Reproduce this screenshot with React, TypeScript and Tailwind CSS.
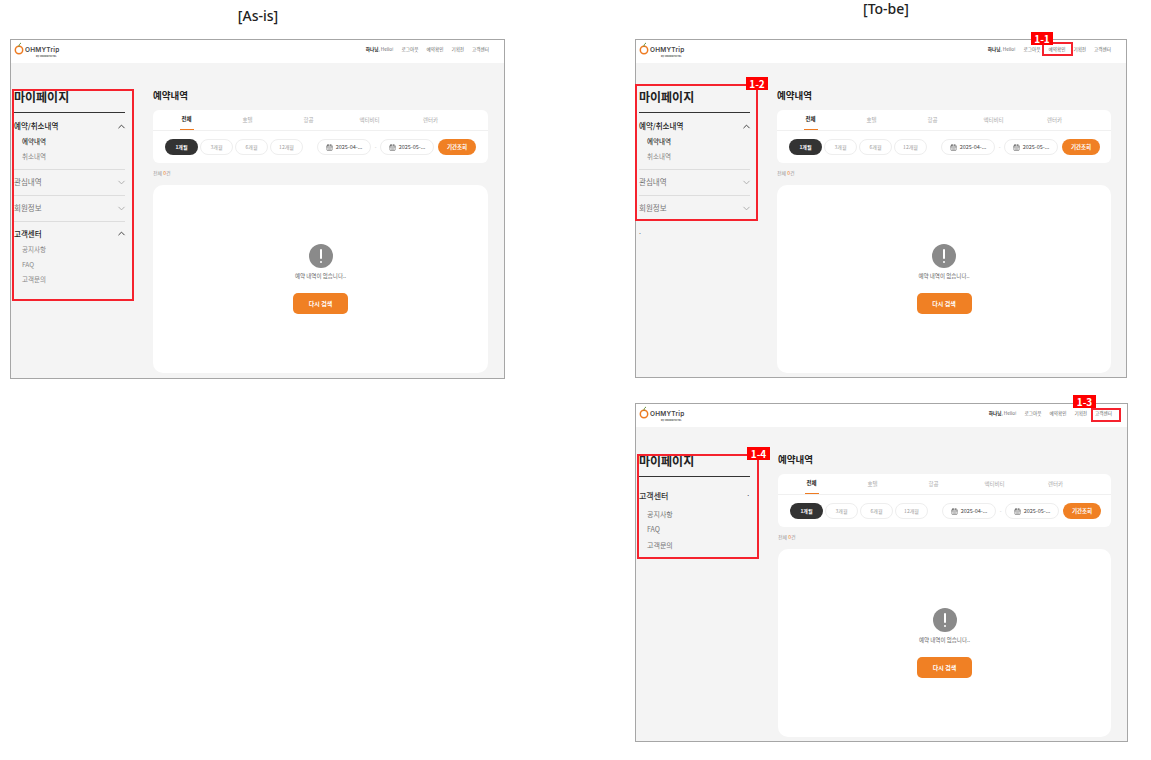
import { CalendarDays, ChevronDown, ChevronUp } from 'lucide-react'

const FONT = { kr: "font-['Noto_Sans_CJK_KR','Noto_Sans',sans-serif]" }

const NAV = ['로그아웃', '예약확인', '기획전', '고객센터']
const TABS = ['전체', '호텔', '항공', '액티비티', '렌터카']
const PERIODS = ['1개월', '3개월', '6개월', '12개월']

type MenuItem = { label: string; open?: boolean; active?: string; subs?: string[] }

const BOOKING: MenuItem = { label: '예약/취소내역', open: true, active: '예약내역', subs: ['예약내역', '취소내역'] }
const SUPPORT: MenuItem = { label: '고객센터', open: true, subs: ['공지사항', 'FAQ', '고객문의'] }

function Logo() {
  return (
    <div className="flex flex-col pt-[1px]">
      <div className="flex items-center gap-[1px]">
        <svg width="10" height="13" viewBox="0 0 10 13" className="-mt-[3px]">
          <circle cx="5" cy="8" r="3.7" fill="none" stroke="#ee7b22" strokeWidth="1.5" />
          <path d="M5 4.5C5 3 5.6 1.8 7 1" fill="none" stroke="#5c8a2e" strokeWidth="1" />
        </svg>
        <span className="font-['Inter',sans-serif] text-[6.5px] leading-none font-semibold tracking-[0.2px] text-[#444]">OHMYTrip</span>
      </div>
      <span className="ml-[22px] font-['Inter',sans-serif] text-[2.5px] leading-[4px] font-bold text-[#555]">by ONDERHOTEL</span>
    </div>
  )
}

function Header() {
  return (
    <div className="flex h-[23px] shrink-0 items-center justify-between bg-white pr-[15px] pl-[3px]">
      <Logo />
      <div className="flex items-center gap-2 pb-[5px] text-[4.6px] text-[#666]">
        <span><b className="text-[#222]">하나님</b>, Hello!</span>
        {NAV.map((n) => <span key={n}>{n}</span>)}
      </div>
    </div>
  )
}

function Section({ item }: { item: MenuItem }) {
  return (
    <div>
      <div className="flex h-5 items-center justify-between">
        <span className={item.open ? 'text-[7.5px] font-medium text-[#222]' : 'text-[7.5px] text-[#777]'}>{item.label}</span>
        {item.open ? (
          <ChevronUp className="-mr-[2px] h-[11px] w-[11px] text-[#333]" strokeWidth={2} />
        ) : (
          <ChevronDown className="-mr-[2px] h-[11px] w-[11px] text-[#aaa]" strokeWidth={2} />
        )}
      </div>
      {item.subs && (
        <div className="-mt-[1.5px] pb-[4px] pl-2">
          {item.subs.map((s) => (
            <div key={s} className={s === item.active ? 'flex h-[15px] items-center text-[6.5px] font-medium text-[#333]' : 'flex h-[15px] items-center text-[6.5px] text-[#888]'}>
              {s}
            </div>
          ))}
        </div>
      )}
    </div>
  )
}

function Sidebar({ variant }: { variant: 'full' | 'mine' | 'support' }) {
  return (
    <div className="ml-[3px] w-[111px] shrink-0 pt-[25px]">
      <div className="flex h-[18px] items-center text-[12px] font-bold text-[#222]">마이페이지</div>
      <div className="mt-[6px] h-px bg-[#333]" />
      {variant === 'support' ? (
        <div className="pt-[8px]">
          <div className="flex h-[22px] items-center justify-between text-[8px] font-medium text-[#333]">
            고객센터
            <span className="text-[6px] leading-none">·</span>
          </div>
          <div className="-mt-[1px] pl-2 text-[7px] text-[#777]">
            {SUPPORT.subs!.map((s) => <div key={s} className="flex h-[15.5px] items-center">{s}</div>)}
          </div>
        </div>
      ) : (
        <div className="divide-y divide-[#ddd] pt-[3px]">
          <Section item={BOOKING} />
          <div className="py-[2.5px]"><Section item={{ label: '관심내역' }} /></div>
          <div className="py-[2.5px]"><Section item={{ label: '회원정보' }} /></div>
          {variant === 'full' && <div className="pt-[2px]"><Section item={SUPPORT} /></div>}
        </div>
      )}
      {variant === 'mine' && <div className="mt-[7px] text-[7px] leading-none text-[#666]">.</div>}
    </div>
  )
}

function DateBox({ value }: { value: string }) {
  return (
    <div className="flex h-4 w-[54px] items-center justify-center gap-[3px] rounded-full border border-[#eee] bg-white text-[5.5px] text-[#444]">
      <CalendarDays className="h-[7px] w-[7px]" strokeWidth={1.8} />
      {value}
    </div>
  )
}

function Main({ tight }: { tight?: boolean }) {
  return (
    <div className={tight ? 'ml-[27px] flex flex-1 flex-col pt-[24px] pr-[15px]' : 'ml-[28px] flex flex-1 flex-col pt-[24px] pr-4'}>
      <div className="flex h-4 items-center text-[9.5px] font-bold text-[#222]">예약내역</div>
      <div className="mt-[7px] h-[53px] rounded-[6px] bg-white">
        <div className="flex h-[21px] border-b border-[#f0f0f0] px-[3px]">
          {TABS.map((t, i) => (
            <div key={t} className="flex w-[61px] justify-center">
              <span className={i === 0 ? 'flex h-[20px] w-[14px] items-center justify-center border-b border-[#ee7b22] text-[5.5px] font-bold text-[#222]' : 'flex h-[20px] items-center text-[5.5px] text-[#aaa]'}>
                {t}
              </span>
            </div>
          ))}
        </div>
        <div className="flex items-center pt-2 pl-3">
          <div className="flex gap-[2px]">
            {PERIODS.map((p, i) => (
              <div key={p} className={i === 0 ? 'flex h-4 w-[33px] items-center justify-center rounded-full bg-[#333] text-[5px] font-bold text-white' : 'flex h-4 w-[33px] items-center justify-center rounded-full border border-[#eee] text-[5px] text-[#999]'}>
                {p}
              </div>
            ))}
          </div>
          <div className="ml-[14px]"><DateBox value="2025-04-..." /></div>
          <span className="w-[9px] text-center text-[5px] text-[#bbb]">-</span>
          <DateBox value="2025-05-..." />
          <div className="ml-[4px] flex h-4 w-[38px] items-center justify-center rounded-full bg-[#f08024] text-[5.5px] font-bold text-white">기간조회</div>
        </div>
      </div>
      <div className="mt-[6px] flex h-2 items-center text-[5px] text-[#999]">
        전체&nbsp;<span className="text-[#ee7b22]">0</span>건
      </div>
      <div className="mt-2 flex h-[188px] flex-col items-center rounded-[10px] bg-white pt-[59px]">
        <div className="flex h-6 w-6 flex-col items-center justify-center gap-[1.5px] rounded-full bg-[#8a8a8a]">
          <span className="h-[10px] w-[2px] rounded-full bg-white" />
          <span className="h-[2px] w-[2px] rounded-full bg-white" />
        </div>
        <div className="mt-[4px] flex h-[9px] items-center text-[5.5px] text-[#666]">예약 내역이 없습니다..</div>
        <div className="mt-[12px] flex h-[21px] w-[55px] items-center justify-center rounded-[5px] bg-[#f08024] text-[6px] font-bold text-white">다시 검색</div>
      </div>
    </div>
  )
}

function Frame({ className, variant }: { className: string; variant: 'full' | 'mine' | 'support' }) {
  return (
    <div className={`absolute flex flex-col border border-[#a6a6a6] bg-[#f4f4f4] ${className}`}>
      <Header />
      <div className="flex flex-1">
        <Sidebar variant={variant} />
        <Main tight={variant === 'mine'} />
      </div>
    </div>
  )
}

function Callout({ box, tag, label }: { box: string; tag: string; label?: string }) {
  return (
    <>
      <div className={`absolute border-2 border-[#f5222d] ${box}`} />
      {label && (
        <div className={`absolute flex items-center justify-center bg-[#ff0000] text-[10px] font-bold text-white ${tag}`}>{label}</div>
      )}
    </>
  )
}

export default function App() {
  return (
    <div className={`relative h-[760px] w-[1151px] overflow-hidden bg-white ${FONT.kr}`}>
      <div className="absolute top-[7px] left-[228px] w-[60px] text-center font-['Noto_Sans',sans-serif] text-[14px] leading-[18px] font-medium text-[#222]">[As-is]</div>
      <div className="absolute top-0 left-[856px] w-[60px] text-center font-['Noto_Sans',sans-serif] text-[14px] leading-[18px] font-medium text-[#222]">[To-be]</div>

      <Frame className="top-[39px] left-[10px] h-[340px] w-[495px]" variant="full" />
      <Frame className="top-[39px] left-[635px] h-[339px] w-[492px]" variant="mine" />
      <Frame className="top-[403px] left-[635px] h-[339px] w-[493px]" variant="support" />

      <Callout box="top-[89px] left-[12px] h-[212px] w-[122px]" tag="" />
      <Callout box="top-[84px] left-[635px] h-[137px] w-[123px]" tag="top-[77px] left-[746px] h-[13px] w-[22px]" label="1-2" />
      <Callout box="top-[42px] left-[1042px] h-[14px] w-[31px]" tag="top-[32px] left-[1031px] h-[13px] w-[22px]" label="1-1" />
      <Callout box="top-[408px] left-[1091px] h-[14px] w-[30px]" tag="top-[395px] left-[1073px] h-[13px] w-[23px]" label="1-3" />
      <Callout box="top-[454px] left-[637px] h-[105px] w-[122px]" tag="top-[447px] left-[747px] h-[13px] w-[23px]" label="1-4" />
    </div>
  )
}
